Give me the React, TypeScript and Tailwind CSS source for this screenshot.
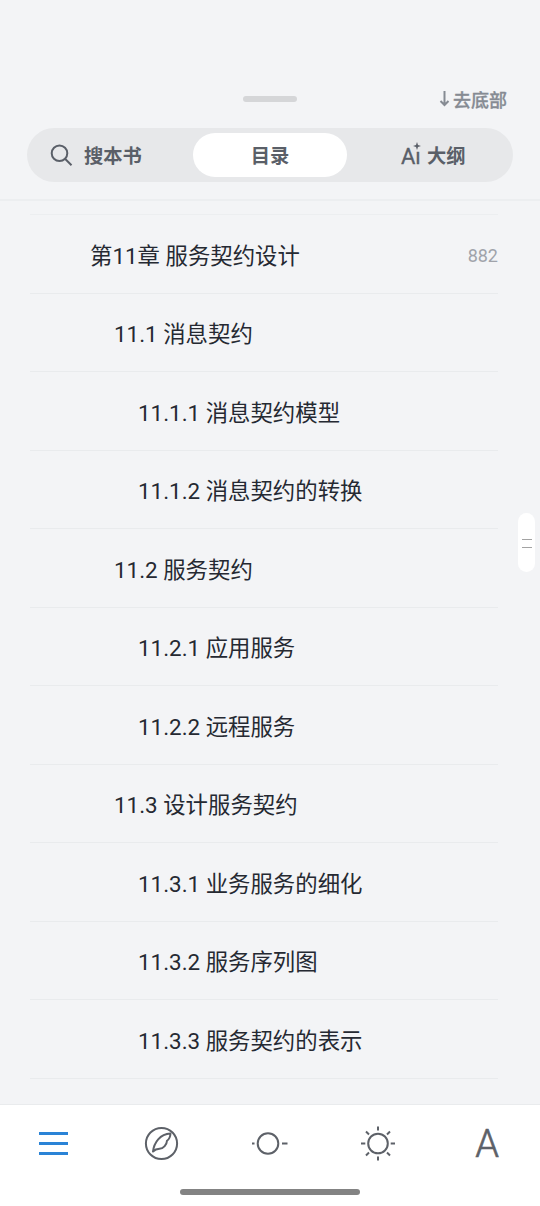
import type { ReactNode } from 'react';

type Chapter = {
  title: string;
  level: 1 | 2 | 3;
  page?: number;
};

const chapters: Chapter[] = [
  { title: '第11章 服务契约设计', level: 1, page: 882 },
  { title: '11.1 消息契约', level: 2 },
  { title: '11.1.1 消息契约模型', level: 3 },
  { title: '11.1.2 消息契约的转换', level: 3 },
  { title: '11.2 服务契约', level: 2 },
  { title: '11.2.1 应用服务', level: 3 },
  { title: '11.2.2 远程服务', level: 3 },
  { title: '11.3 设计服务契约', level: 2 },
  { title: '11.3.1 业务服务的细化', level: 3 },
  { title: '11.3.2 服务序列图', level: 3 },
  { title: '11.3.3 服务契约的表示', level: 3 },
];

const indent = {
  1: 'pl-[60px]',
  2: 'pl-[84px]',
  3: 'pl-[108px]',
};

function Header() {
  return (
    <header className="h-[201px] shrink-0 border-b-2 border-[#eceef0] pt-[88px]">
      <div className="grid h-[22px] grid-cols-3 items-start">
        <div className="col-start-2 mt-[7.5px] h-1.5 w-[54px] justify-self-center rounded-full bg-[#d5d6d8]" />
        <button className="mr-[33px] flex h-[22px] items-center justify-self-end text-[18px] leading-[22px] font-medium text-[#868b93]">
          <svg className="mr-[3px] h-[18px] w-[11px]" viewBox="0 0 11 18" fill="none" stroke="currentColor" strokeWidth="2">
            <path d="M5.5 1v14M1.5 11l4 4 4-4" />
          </svg>
          <span className="pt-[3px] [-webkit-text-stroke:0.3px]">去底部</span>
        </button>
      </div>

      <div className="mx-[27px] mt-[18px] grid h-[54px] grid-cols-[166px_154px_1fr] rounded-full bg-[#e7e8ea] py-[5px] text-[19.3px] font-bold text-[#5a5f68]">
        <button className="flex items-center pl-[23px]">
          <svg className="mr-2.5 h-6 w-6" viewBox="0 0 24 24" fill="none" stroke="currentColor" strokeWidth="2">
            <circle cx="9.5" cy="10.3" r="7.8" />
            <path d="M15 15.8l6.5 6.5" />
          </svg>
          <span className="pt-[5px]">搜本书</span>
        </button>
        <button className="rounded-full bg-white pt-[5px]">目录</button>
        <button className="flex items-center pl-[54px]">
          <span className="relative mt-[3px] mr-1.5 w-5 text-left text-[22px] leading-6 font-normal [-webkit-text-stroke:0.3px]">
            Aı
            <svg className="absolute -top-[3px] left-3 h-2 w-2" viewBox="0 0 8 8" fill="currentColor">
              <path d="M4 0l1 3 3 1-3 1-1 3-1-3-3-1 3-1z" />
            </svg>
          </span>
          <span className="pt-[5px]">大纲</span>
        </button>
      </div>
    </header>
  );
}

function ChapterRow({ title, level, page }: Chapter) {
  return (
    <li className={`flex h-[78.5px] items-center justify-between border-b border-[#e9ebed] ${indent[level]}`}>
      <span className="pt-[5px] text-[22.4px] whitespace-nowrap text-[#252932]">{title}</span>
      {page && <span className="pt-0.5 text-[18px] text-[#a0a3aa]">{page}</span>}
    </li>
  );
}

function NavItem({ children, active }: { children: ReactNode; active?: boolean }) {
  return (
    <button className={`flex h-[78px] w-[108px] items-center justify-center ${active ? 'text-[#2a83d6]' : 'text-[#5d6168]'}`}>
      {children}
    </button>
  );
}

function BottomNav() {
  return (
    <nav className="h-[102px] shrink-0 border-t border-[#e9ebed] bg-white">
      <div className="flex">
        <NavItem active>
          <svg className="h-9 w-9" viewBox="0 0 36 36" fill="none" stroke="currentColor" strokeWidth="3">
            <path d="M3 7.5h29M3 17.5h29M3 27.5h29" />
          </svg>
        </NavItem>
        <NavItem>
          <svg className="h-9 w-9" viewBox="0 0 36 36" fill="none" stroke="currentColor" strokeWidth="2">
            <circle cx="17.5" cy="17.5" r="15.6" />
            <path d="M9 25.5C10 16.5 16 8 26.5 7.5c-.2 2.7-1 5.5-3.5 7.3-.2 3.7-3.5 8-7.5 8-2.6.1-4.500.7-6.500 2.700z" strokeLinejoin="round" />
          </svg>
        </NavItem>
        <NavItem>
          <svg className="h-9 w-9" viewBox="0 0 36 36" fill="none" stroke="currentColor" strokeWidth="2">
            <circle cx="16" cy="17.5" r="10.3" />
            <path d="M0 17.5h2.500M30 17.5h5.500" />
          </svg>
        </NavItem>
        <NavItem>
          <svg className="h-9 w-9" viewBox="0 0 36 36" fill="none" stroke="currentColor" strokeWidth="2">
            <circle cx="18" cy="17.5" r="9.8" />
            <path d="M18 .5v4M18 30.5v4M1 17.5h4.300M30.700 17.5H35M6 5.5l3 3M27 26.5l3 3M6 29.5l3-3M27 8.5l3-3" />
          </svg>
        </NavItem>
        <NavItem>
          <span className="ml-0.5 text-[38px] leading-none font-light [-webkit-text-stroke:0.6px]">A</span>
        </NavItem>
      </div>
      <div className="mx-auto mt-1.5 h-1.5 w-[180px] rounded-full bg-[#838383]" />
    </nav>
  );
}

export default function App() {
  return (
    <div className="relative flex h-[1206px] w-[540px] flex-col overflow-hidden bg-[#f3f4f6] font-[Roboto,'Noto_Sans_CJK_SC',sans-serif]">
      <Header />

      <main className="min-h-0 flex-1 overflow-hidden pr-[42px] pl-[30px]">
        <div className="h-[14.4px] border-b border-[#eceef0]" />
        <ul>
          {chapters.map((chapter) => (
            <ChapterRow key={chapter.title} {...chapter} />
          ))}
        </ul>
      </main>

      {/* Fast scroll handle */}
      <div className="absolute top-[513px] right-[5px] flex h-[59px] w-[17px] flex-col items-center justify-center gap-[7px] rounded-full bg-white pt-0.5">
        <span className="h-px w-2.5 bg-[#a3a3a3]" />
        <span className="h-px w-2.5 bg-[#a3a3a3]" />
      </div>

      <BottomNav />
    </div>
  );
}
